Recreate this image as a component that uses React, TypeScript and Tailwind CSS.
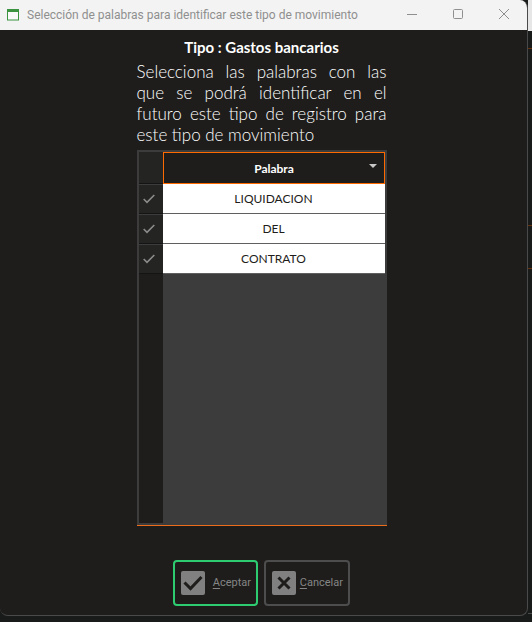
import { useState } from "react";

const WORDS = ["LIQUIDACION", "DEL", "CONTRATO"];

function TitleBar() {
  return (
    <header className="flex h-[30px] shrink-0 items-center bg-[#f3f3f3] pl-[7px] text-[#8f8f8f]">
      <svg width="12" height="12" viewBox="0 0 12 12" className="shrink-0" aria-hidden="true">
        <rect x="0.5" y="1" width="11" height="10" fill="#fafafa" stroke="#3c9440" />
        <rect x="0" y="0" width="12" height="3" fill="#3c9440" />
      </svg>
      <h1 className="ml-2 flex-1 truncate font-['Roboto',sans-serif] text-[12px]">
        Selección de palabras para identificar este tipo de movimiento
      </h1>
      <div className="flex shrink-0">
        <button type="button" aria-label="Minimizar" className="flex h-[30px] w-[46px] items-center justify-center">
          <svg width="12" height="12" viewBox="0 0 12 12" fill="none" stroke="currentColor">
            <path d="M1 5.5h10" />
          </svg>
        </button>
        <button type="button" aria-label="Maximizar" className="flex h-[30px] w-[46px] items-center justify-center">
          <svg width="12" height="12" viewBox="0 0 12 12" fill="none" stroke="currentColor">
            <rect x="1.5" y="0.5" width="9" height="9" rx="1" />
          </svg>
        </button>
        <button type="button" aria-label="Cerrar" className="flex h-[30px] w-[46px] items-center justify-center">
          <svg width="12" height="12" viewBox="0 0 12 12" fill="none" stroke="currentColor">
            <path d="M1 0l10 10M11 0L1 10" />
          </svg>
        </button>
      </div>
    </header>
  );
}

function WordTable() {
  const [checked, setChecked] = useState<boolean[]>(WORDS.map(() => true));
  const toggle = (index: number) =>
    setChecked((values) => values.map((value, i) => (i === index ? !value : value)));

  return (
    <div className="mt-[5px] flex min-h-[200px] flex-1 flex-col border-b border-[#ed6c1c] bg-[#3c3c3c] p-[2px]">
      <table className="w-full table-fixed border-separate border-spacing-0">
        <thead>
          <tr className="h-8">
            <td className="w-6 border-b border-[#141414] bg-[#242423] p-0" />
            <th scope="col" className="border border-[#ff6a00] bg-[#1e1d1b] p-0 text-[12px] font-bold text-white">
              <div className="flex items-center">
                <span className="flex-1 pt-px pl-4">Palabra</span>
                <svg width="8" height="8" viewBox="0 0 8 8" className="mr-[7px] mb-1 shrink-0" aria-hidden="true">
                  <path d="M0 2h8L4 6z" fill="#c8c8c8" />
                </svg>
              </div>
            </th>
          </tr>
        </thead>
        <tbody>
          {WORDS.map((word, index) => (
            <tr key={word} className="h-[30px]">
              <td className="border-t border-b border-t-[#3c3c3c] border-b-[#141414] bg-[#242423] p-0">
                <label className="grid h-7 cursor-pointer place-items-center">
                  <input
                    type="checkbox"
                    aria-label={word}
                    checked={checked[index]}
                    onChange={() => toggle(index)}
                    className="peer col-start-1 row-start-1 size-4 appearance-none"
                  />
                  <svg
                    width="12"
                    height="10"
                    viewBox="0 0 12 10"
                    className="invisible col-start-1 row-start-1 mr-1 peer-checked:visible"
                    fill="none"
                    stroke="#8c8c8c"
                    strokeWidth="1.600"
                    aria-hidden="true"
                  >
                    <path d="M0.7 5L4 8.3L11.3 1" />
                  </svg>
                </label>
              </td>
              <td className="border-b border-[#5f5f5f] bg-white p-0 text-center text-[12px] text-[#1e1d1b]">{word}</td>
            </tr>
          ))}
        </tbody>
      </table>
      <div className="w-6 flex-1 bg-[#1e1d1b]" />
    </div>
  );
}

export default function App() {
  return (
    <div className="flex min-h-screen bg-[#191a1a] pb-[6px]">
      <main className="flex flex-1 flex-col overflow-hidden rounded-tr-lg rounded-b-lg border-r border-b border-[#4a4a4a] bg-[#1e1d1b] font-['Lato',sans-serif]">
        <TitleBar />
        <div className="flex flex-1 flex-col pr-1">
          <section className="mx-auto flex w-[250px] flex-1 flex-col pt-[7px]">
            <h2 className="text-center text-[15px] leading-5 font-bold text-white">Tipo : Gastos bancarios</h2>
            <p className="mt-1 text-justify text-[17px] leading-[21px] font-light text-white">
              Selecciona las palabras con las que se podrá identificar en el futuro este tipo de registro para este tipo
              de movimiento
            </p>
            <WordTable />
          </section>
          <footer className="mt-[34px] mb-[9px] flex justify-center gap-[6px] font-['Roboto',sans-serif] text-[11px] text-[#858585]">
            <button
              type="button"
              className="flex h-[46px] w-[85px] items-center justify-between rounded border-2 border-[#2ecc71] pr-[5px] pl-[6px]"
            >
              <svg width="24" height="24" viewBox="0 0 24 24" fill="none" className="shrink-0" aria-hidden="true">
                <rect width="24" height="24" rx="2" fill="#808080" />
                <path d="M3.5 11.500l6 6L20.5 6" stroke="#1e1d1b" strokeWidth="3" />
              </svg>
              <span className="pt-px">
                <u className="underline-offset-2">A</u>ceptar
              </span>
            </button>
            <button
              type="button"
              className="flex h-[46px] w-[86px] items-center justify-between rounded border-2 border-[#4d4d4d] pr-[5px] pl-[6px]"
            >
              <svg width="24" height="24" viewBox="0 0 24 24" fill="none" className="shrink-0" aria-hidden="true">
                <rect width="24" height="24" rx="2" fill="#808080" />
                <path d="M6.500 6.500l11 11M17.500 6.500l-11 11" stroke="#1e1d1b" strokeWidth="3" />
              </svg>
              <span className="pt-px">
                <u className="underline-offset-2">C</u>ancelar
              </span>
            </button>
          </footer>
        </div>
      </main>
      <aside className="flex w-1 shrink-0 flex-col" aria-hidden="true">
        <div className="h-[31px] bg-[#e6e6e6]" />
        <div className="h-[18px] border-b border-[#63320f]" />
        <div className="h-[177px] border-b border-[#63320f]" />
        <div className="h-[43px] border-b border-[#63320f]" />
        <div className="mb-[2px] flex-1 border-b border-[#4a4a4a]" />
      </aside>
    </div>
  );
}
